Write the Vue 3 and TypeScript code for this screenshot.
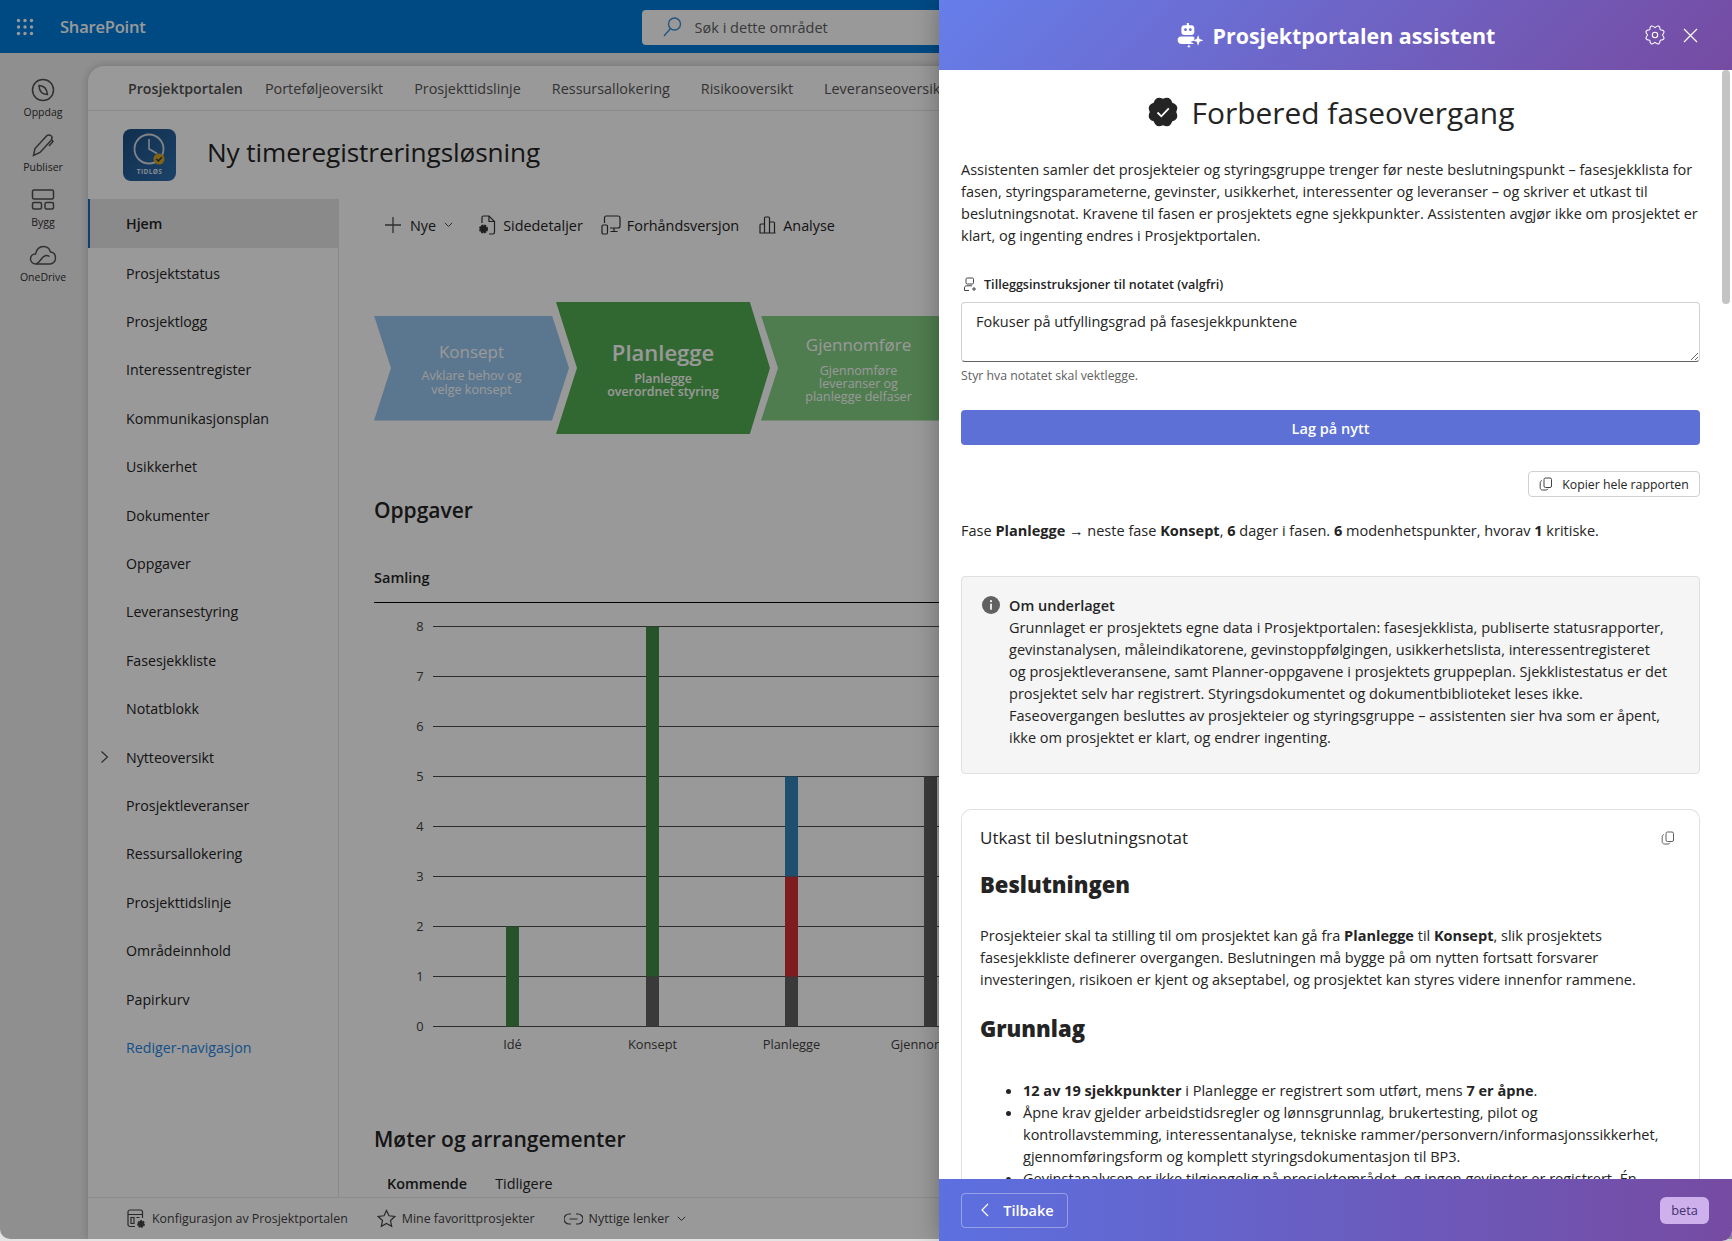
<template>
  <div class="app">
    <div class="page">
      <header class="topbar">
        <svg class="waffle" width="18" height="18" viewBox="0 0 18 18">
          <circle v-for="d in waffleDots" :key="d.key" :cx="d.x" :cy="d.y" r="1.7" fill="#ffffff" />
        </svg>
        <span class="brand">SharePoint</span>
        <div class="search">
          <svg width="22" height="22" viewBox="0 0 22 22" fill="none" stroke="#3d8fd6" stroke-width="1.4">
            <circle cx="13.5" cy="8" r="6" />
            <path d="M9.5 12.5 3 20" />
          </svg>
          <span>Søk i dette området</span>
        </div>
      </header>

      <div class="page-body">
        <aside class="rail">
          <div class="rail-item">
            <svg width="24" height="24" viewBox="0 0 24 24" fill="none" stroke="#505050" stroke-width="1.5">
              <circle cx="12" cy="12" r="10.5" />
              <path d="M8 7.5c5 .2 8 3.5 8.5 9-5.2-.2-8.3-3.5-8.5-9Z" />
            </svg>
            <span>Oppdag</span>
          </div>
          <div class="rail-item">
            <svg width="24" height="24" viewBox="0 0 24 24" fill="none" stroke="#505050" stroke-width="1.5">
              <path d="M2.5 22.5 4 15.5 15.5 3c1.5-1.5 4-1.5 5 .2 1 1.5.5 3-.5 4.3L9 19.5Z" />
              <path d="M21 7l1 1.5-4 4.5" />
            </svg>
            <span>Publiser</span>
          </div>
          <div class="rail-item">
            <svg width="24" height="22" viewBox="0 0 24 22" fill="none" stroke="#505050" stroke-width="1.5">
              <rect x="1.5" y="1" width="21" height="9" rx="1.5" />
              <rect x="1.5" y="13.5" width="9" height="6.5" rx="1.5" />
              <rect x="14" y="13.5" width="8.5" height="6.5" rx="1.5" />
            </svg>
            <span>Bygg</span>
          </div>
          <div class="rail-item">
            <svg width="28" height="22" viewBox="0 0 28 22" fill="none" stroke="#505050" stroke-width="1.4">
              <path d="M7 20c-3.3 0-5.5-2.3-5.500-5 0-3 2.200-5 5-5 1-4.500 4-7.500 8-7.500 3.500 0 6 2 7 5.500 3 .3 5 2.800 5 6 0 3.500-2.500 6-5.500 6Z" />
              <path d="M7 20c3-1 4.500-4 6.500-6.500 2-2 5-2.500 7-1" />
            </svg>
            <span>OneDrive</span>
          </div>
        </aside>

        <div class="card">
          <nav class="site-nav">
            <a v-for="(link, i) in siteLinks" :key="link" :class="{ current: i === 0 }">{{ link }}</a>
          </nav>

          <div class="site-head">
            <div class="logo">
              <svg width="53" height="52" viewBox="0 0 53 52">
                <circle cx="26" cy="20" r="14.5" fill="none" stroke="#d8dde2" stroke-width="1.8" />
                <path d="M26 10v10l8 4.500" fill="none" stroke="#d8dde2" stroke-width="1.6" />
                <circle cx="36" cy="30" r="5.5" fill="#d9a520" />
                <path d="m33.300 30 2 2 3.500-3.800" fill="none" stroke="#14375c" stroke-width="1.5" />
              </svg>
              <span class="logo-text">TIDLØS</span>
            </div>
            <h1>Ny timeregistreringsløsning</h1>
          </div>

          <div class="site-body">
            <aside class="side">
              <a
                v-for="item in sideItems"
                :key="item"
                class="side-item"
                :class="{ active: item === 'Hjem', edit: item === 'Rediger-navigasjon' }"
              >
                <svg v-if="item === 'Nytteoversikt'" class="side-caret" width="9" height="14" viewBox="0 0 9 14" fill="none" stroke="#444" stroke-width="1.1">
                  <path d="m1.500 1.500 6 5.500-6 5.500" />
                </svg>
                {{ item }}
              </a>
            </aside>

            <main class="content">
              <div class="cmdbar">
                <div class="cmd cmd-new">
                  <svg width="18" height="18" viewBox="0 0 18 18" stroke="#505050" stroke-width="1.3"><path d="M9 1v16M1 9h16" /></svg>
                  <span>Nye</span>
                  <svg width="9" height="6" viewBox="0 0 9 6" fill="none" stroke="#505050"><path d="m.8.8 3.700 3.700L8.200.8" /></svg>
                </div>
                <div class="cmd cmd-details">
                  <svg width="18" height="20" viewBox="0 0 18 20" fill="none" stroke="#333" stroke-width="1.2">
                    <path d="M4 8V2.500c0-.8.500-1.500 1.500-1.500H11l5.500 5.500V17c0 1-.7 2-1.700 2H11" />
                    <path d="M11 1v5.500h5.500" />
                    <circle cx="5.5" cy="14" r="3.5" fill="#333" stroke-dasharray="2 .8" stroke-width="2" />
                  </svg>
                  <span>Sidedetaljer</span>
                </div>
                <div class="cmd cmd-preview">
                  <svg width="20" height="20" viewBox="0 0 20 20" fill="none" stroke="#333" stroke-width="1.2">
                    <path d="M3.500 8V3c0-1 .7-2 1.700-2H17c1 0 2 1 2 2v8c0 1-1 2-2 2H9" />
                    <rect x="1" y="10" width="5.5" height="9" rx="1.2" />
                    <path d="M13 13v3M9.500 16.500h7" />
                  </svg>
                  <span>Forhåndsversjon</span>
                </div>
                <div class="cmd">
                  <svg width="18" height="18" viewBox="0 0 18 18" fill="none" stroke="#333" stroke-width="1.2">
                    <path d="M1 17V9c0-.6.400-1 1-1h3.500v9M5.500 17V2c0-.6.400-1 1-1h3c.6 0 1 .4 1 1v15M10.500 17V6h4c.6 0 1 .4 1 1v10M.5 17h16" />
                  </svg>
                  <span>Analyse</span>
                </div>
              </div>

              <div class="phases">
                <div class="phase phase-a">
                  <strong>Konsept</strong>
                  <small>Avklare behov og<br />velge konsept</small>
                </div>
                <div class="phase phase-b">
                  <strong>Planlegge</strong>
                  <small>Planlegge<br />overordnet styring</small>
                </div>
                <div class="phase phase-c">
                  <strong>Gjennomføre</strong>
                  <small>Gjennomføre<br />leveranser og<br />planlegge delfaser</small>
                </div>
              </div>

              <h2 class="section-title">Oppgaver</h2>
              <div class="chart-title">Samling</div>
              <svg class="chart" width="700" height="460" viewBox="0 0 700 460">
                <g v-for="n in 9" :key="n">
                  <line x1="59" :x2="700" :y1="gridY(n - 1)" :y2="gridY(n - 1)" stroke="#4c4c4c" stroke-width="1" />
                  <text class="axis" x="46" :y="gridY(n - 1) + 4.5" text-anchor="middle">{{ n - 1 }}</text>
                </g>
                <g v-for="col in chartColumns" :key="col.label">
                  <rect
                    v-for="seg in col.segments"
                    :key="seg.from"
                    :x="col.x - 6.5"
                    :y="gridY(seg.to)"
                    width="13"
                    :height="gridY(seg.from) - gridY(seg.to)"
                    :fill="seg.color"
                  />
                  <text class="axis" :x="col.x" y="448" text-anchor="middle">{{ col.label }}</text>
                </g>
              </svg>

              <h2 class="section-title meetings">Møter og arrangementer</h2>
              <div class="tabs">
                <span class="tab-on">Kommende</span>
                <span>Tidligere</span>
              </div>
            </main>
          </div>

          <footer class="site-foot">
            <div class="foot-link">
              <svg width="19" height="20" viewBox="0 0 19 20" fill="none" stroke="#444" stroke-width="1.2">
                <path d="M8 17.500H3c-1 0-2-1-2-2V3c0-1 1-2 2-2h10.500c1 0 2 1 2 2v6" />
                <path d="M1 5.500h14.500M4 8.500h3v6H4zM9.500 8.500h3" />
                <circle cx="14" cy="15" r="3" fill="#444" stroke-dasharray="1.8 .8" stroke-width="1.8" />
              </svg>
              <span>Konfigurasjon av Prosjektportalen</span>
            </div>
            <div class="foot-link">
              <svg width="19" height="19" viewBox="0 0 19 19" fill="none" stroke="#444" stroke-width="1.2">
                <path d="m9.500 1.500 2.500 5.300 5.800.7-4.300 4 1.200 5.800-5.200-2.900-5.200 2.900 1.200-5.800-4.300-4 5.800-.7Z" />
              </svg>
              <span>Mine favorittprosjekter</span>
            </div>
            <div class="foot-link">
              <svg width="19" height="12" viewBox="0 0 19 12" fill="none" stroke="#444" stroke-width="1.2">
                <path d="M7 1H5a5 5 0 0 0 0 10h2M12 1h2a5 5 0 0 1 0 10h-2M5.500 6h8" />
              </svg>
              <span>Nyttige lenker</span>
              <svg class="small-chevron" width="9" height="6" viewBox="0 0 9 6" fill="none" stroke="#444"><path d="m.8.8 3.700 3.700L8.200.8" /></svg>
            </div>
          </footer>
        </div>
      </div>
      <div class="dim"></div>
    </div>

    <section class="panel">
      <header class="panel-head">
        <div class="panel-name">
          <svg width="28" height="28" viewBox="0 0 26 26" fill="#ffffff">
            <path fill-rule="evenodd" d="M10 1h2v2h2.500c1.400 0 2.500 1.100 2.500 2.500v4c0 1.400-1.100 2.500-2.500 2.500h-7C6.100 12 5 10.900 5 9.500v-4C5 4.100 6.100 3 7.500 3H10ZM8.800 5.800a1.300 1.300 0 1 0 0 2.600 1.300 1.300 0 0 0 0-2.600Zm4.500 0a1.300 1.300 0 1 0 0 2.600 1.300 1.300 0 0 0 0-2.600Z" />
            <path d="M4.500 13.500h10.300c1 0 1.900.4 2.500 1.100l-1 2.900-3 1 2.700 1 .4 1H5.500C3 20.500 1.500 19 1.500 16.800c0-2 1.300-3.300 3-3.300Z" />
            <path d="m20.500 12 1.300 3.700 3.700 1.300-3.700 1.300-1.300 3.700-1.300-3.700-3.700-1.300 3.700-1.300ZM12 20.500l.5 1.500 1.500.5-1.500.5-.5 1.500-.5-1.500-1.500-.5 1.500-.5Z" />
          </svg>
          <span>Prosjektportalen assistent</span>
        </div>
        <div class="panel-actions">
          <svg width="20" height="20" viewBox="0 0 20 20" fill="none" stroke="#ffffff" stroke-width="1.1">
            <path :d="gearPath" stroke-linejoin="round" />
            <circle cx="10" cy="10" r="2.7" />
          </svg>
          <svg width="15" height="15" viewBox="0 0 15 15" stroke="#ffffff" stroke-width="1.2"><path d="m1 1 13 13M14 1 1 14" /></svg>
        </div>
      </header>

      <div class="panel-body">
        <div class="tool-title">
          <svg width="32" height="32" viewBox="0 0 32 32">
            <path :d="badgePath" fill="#242424" />
            <path d="m10.500 16.500 3.800 3.800 7.500-8" fill="none" stroke="#ffffff" stroke-width="1.8" />
          </svg>
          <h2>Forbered faseovergang</h2>
        </div>

        <p class="intro">
          Assistenten samler det prosjekteier og styringsgruppe trenger før neste beslutningspunkt – fasesjekklista for
          fasen, styringsparameterne, gevinster, usikkerhet, interessenter og leveranser – og skriver et utkast til
          beslutningsnotat. Kravene til fasen er prosjektets egne sjekkpunkter. Assistenten avgjør ikke om prosjektet er
          klart, og ingenting endres i Prosjektportalen.
        </p>

        <label class="field-label">
          <svg width="14" height="15" viewBox="0 0 14 15" fill="none" stroke="#424242" stroke-width="1">
            <rect x="3" y="1" width="7.5" height="6" rx="1.2" />
            <path d="M1.500 13.500V11c0-1.200.8-2.200 2-2.200h5.500M6 13.500H1.500M11 10v4M9 12h4" />
          </svg>
          Tilleggsinstruksjoner til notatet (valgfri)
        </label>
        <textarea class="field" :value="instructions" rows="2"></textarea>
        <div class="hint">Styr hva notatet skal vektlegge.</div>

        <button class="primary">Lag på nytt</button>

        <div class="copy-row">
          <button class="copy-all">
            <svg width="14" height="14" viewBox="0 0 14 14" fill="none" stroke="#424242" stroke-width="1">
              <rect x="5" y="1" width="7.5" height="9.5" rx="1.5" />
              <path d="M3 3.500c-1 .3-1.800 1-1.800 2v5.300c0 1.200 1 2.200 2.200 2.200h3.800c.8 0 1.500-.5 1.800-1.300" />
            </svg>
            Kopier hele rapporten
          </button>
        </div>

        <p class="summary">
          Fase <b>Planlegge</b> <span class="arrow">→</span> neste fase <b>Konsept</b>, <b>6</b> dager i fasen. <b>6</b> modenhetspunkter, hvorav
          <b>1</b> kritiske.
        </p>

        <div class="info">
          <svg width="18" height="18" viewBox="0 0 18 18">
            <circle cx="9" cy="9" r="9" fill="#616161" />
            <rect x="8.1" y="7.7" width="1.8" height="6" fill="#f5f5f5" />
            <circle cx="9" cy="5.2" r="1.1" fill="#f5f5f5" />
          </svg>
          <div>
            <div class="info-head">Om underlaget</div>
            Grunnlaget er prosjektets egne data i Prosjektportalen: fasesjekklista, publiserte statusrapporter,<br />
            gevinstanalysen, måleindikatorene, gevinstoppfølgingen, usikkerhetslista, interessentregisteret<br />
            og prosjektleveransene, samt Planner-oppgavene i prosjektets gruppeplan. Sjekklistestatus er det<br />
            prosjektet selv har registrert. Styringsdokumentet og dokumentbiblioteket leses ikke.<br />
            Faseovergangen besluttes av prosjekteier og styringsgruppe – assistenten sier hva som er åpent,<br />
            ikke om prosjektet er klart, og endrer ingenting.
          </div>
        </div>

        <article class="note">
          <div class="note-head">
            <span>Utkast til beslutningsnotat</span>
            <svg width="14" height="14" viewBox="0 0 14 14" fill="none" stroke="#616161" stroke-width="1">
              <rect x="5" y="1" width="7.5" height="9.5" rx="1.5" />
              <path d="M3 3.500c-1 .3-1.800 1-1.800 2v5.300c0 1.200 1 2.200 2.200 2.200h3.800c.8 0 1.500-.5 1.800-1.300" />
            </svg>
          </div>
          <h3>Beslutningen</h3>
          <p>
            Prosjekteier skal ta stilling til om prosjektet kan gå fra <b>Planlegge</b> til <b>Konsept</b>, slik prosjektets<br />
            fasesjekkliste definerer overgangen. Beslutningen må bygge på om nytten fortsatt forsvarer<br />
            investeringen, risikoen er kjent og akseptabel, og prosjektet kan styres videre innenfor rammene.
          </p>
          <h3 class="second">Grunnlag</h3>
          <ul>
            <li><b>12 av 19 sjekkpunkter</b> i Planlegge er registrert som utført, mens <b>7 er åpne</b>.</li>
            <li>
              Åpne krav gjelder arbeidstidsregler og lønnsgrunnlag, brukertesting, pilot og<br />
              kontrollavstemming, interessentanalyse, tekniske rammer/personvern/informasjonssikkerhet,<br />
              gjennomføringsform og komplett styringsdokumentasjon til BP3.
            </li>
            <li>Gevinstanalysen er ikke tilgjengelig på prosjektområdet, og ingen gevinster er registrert. Én</li>
          </ul>
        </article>
      </div>
      <div class="scroll-thumb"></div>

      <footer class="panel-foot">
        <button class="back">
          <svg width="8" height="14" viewBox="0 0 8 14" fill="none" stroke="#ffffff" stroke-width="1.2"><path d="M7 1 1 7l6 6" /></svg>
          Tilbake
        </button>
        <span class="beta">beta</span>
      </footer>
    </section>
  </div>
</template>

<script setup lang="ts">
interface Segment {
  from: number;
  to: number;
  color: string;
}

const DARK = '#616161';
const GREEN = '#418a46';

const siteLinks = [
  'Prosjektportalen',
  'Porteføljeoversikt',
  'Prosjekttidslinje',
  'Ressursallokering',
  'Risikooversikt',
  'Leveranseoversikt',
];

const sideItems = [
  'Hjem',
  'Prosjektstatus',
  'Prosjektlogg',
  'Interessentregister',
  'Kommunikasjonsplan',
  'Usikkerhet',
  'Dokumenter',
  'Oppgaver',
  'Leveransestyring',
  'Fasesjekkliste',
  'Notatblokk',
  'Nytteoversikt',
  'Prosjektleveranser',
  'Ressursallokering',
  'Prosjekttidslinje',
  'Områdeinnhold',
  'Papirkurv',
  'Rediger-navigasjon',
];

const chartColumns: { label: string; x: number; segments: Segment[] }[] = [
  { label: 'Idé', x: 138.5, segments: [{ from: 0, to: 2, color: GREEN }] },
  {
    label: 'Konsept',
    x: 278.5,
    segments: [
      { from: 0, to: 1, color: DARK },
      { from: 1, to: 8, color: GREEN },
    ],
  },
  {
    label: 'Planlegge',
    x: 417.5,
    segments: [
      { from: 0, to: 1, color: DARK },
      { from: 1, to: 3, color: '#d23036' },
      { from: 3, to: 5, color: '#3484b8' },
    ],
  },
  { label: 'Gjennomføre', x: 556.5, segments: [{ from: 0, to: 5, color: DARK }] },
];

const instructions = 'Fokuser på utfyllingsgrad på fasesjekkpunktene';

const gridY = (value: number) => 425.5 - value * 50;

const waffleDots = [0, 1, 2].flatMap((row) =>
  [0, 1, 2].map((col) => ({ key: `${row}-${col}`, x: 2.5 + col * 6.5, y: 2.5 + row * 6.5 })),
);

// scalloped outline, used for the badge and the settings gear
const lobes = (c: number, inner: number, outer: number, count: number) => {
  const at = (r: number, a: number) => `${(c + r * Math.cos(a)).toFixed(2)} ${(c + r * Math.sin(a)).toFixed(2)}`;
  const step = (Math.PI * 2) / count;
  let d = `M${at(inner, 0)}`;
  for (let i = 0; i < count; i++) {
    d += ` Q${at(outer, step * (i + 0.5))} ${at(inner, step * (i + 1))}`;
  }
  return d + 'Z';
};

const badgePath = lobes(16, 13.2, 18, 8);
const gearPath = lobes(10, 7.4, 12.4, 8);
</script>

<style>
html,
body {
  margin: 0;
  overflow: hidden;
}
</style>

<style scoped>
.app {
  position: relative;
  width: 1732px;
  height: 1241px;
  overflow: hidden;
  background: #e4e4e4;
  font-family: 'Open Sans', 'Noto Sans', sans-serif;
  font-size: 14.53px;
  color: #242424;
}
.page {
  position: relative;
  height: 1239px;
  display: flex;
  flex-direction: column;
  overflow: hidden;
  border-bottom-left-radius: 10px;
  background: #eeeeee;
}
.dim {
  position: absolute;
  inset: 0;
  background: rgba(0, 0, 0, 0.4);
}
.topbar {
  height: 53px;
  flex: none;
  display: flex;
  align-items: center;
  background: #007cdd;
  color: #fff;
}
.waffle {
  margin-left: 16px;
}
.brand {
  margin-left: 26px;
  font-size: 16.5px;
  font-weight: 600;
  letter-spacing: -0.2px;
}
.search {
  margin-left: 496px;
  width: 400px;
  height: 35px;
  margin-top: 1px;
  border-radius: 4px;
  background: #ffffff;
  display: flex;
  align-items: center;
  gap: 12px;
  padding-left: 19px;
  color: #616161;
  box-sizing: border-box;
}
.page-body {
  flex: 1;
  display: flex;
  min-height: 0;
}
.rail {
  width: 86px;
  padding-right: 2px;
  flex: none;
  padding-top: 25px;
  display: flex;
  flex-direction: column;
  align-items: center;
  gap: 7px;
}
.rail-item {
  height: 48px;
  display: flex;
  flex-direction: column;
  align-items: center;
  justify-content: flex-start;
  gap: 2px;
  font-size: 10.5px;
  color: #303030;
  font-weight: 500;
  line-height: 16px;
}
.rail-item svg {
  height: 24px;
  flex: none;
}
.card {
  flex: 1;
  margin-top: 13px;
  border-top-left-radius: 16px;
  background: #fff;
  box-shadow: 0 0 8px rgba(0, 0, 0, 0.2);
  display: flex;
  flex-direction: column;
  min-width: 0;
}
.site-nav {
  height: 44px;
  flex: none;
  display: flex;
  align-items: center;
  gap: 31px;
  padding-left: 40px;
  border-bottom: 1px solid #e4e4e4;
  font-size: 14.4px;
  color: #555;
  white-space: nowrap;
  overflow: hidden;
}
.site-nav .current {
  font-weight: 600;
  font-size: 14.2px;
  margin-right: -9px;
  color: #505050;
}
.site-head {
  height: 88px;
  flex: none;
  display: flex;
  align-items: center;
  padding-left: 35px;
  gap: 31px;
}
.site-head h1 {
  margin: 0 0 6px;
  font-size: 26.2px;
  font-weight: 500;
  color: #242424;
  letter-spacing: -0.1px;
}
.logo {
  position: relative;
  width: 53px;
  height: 52px;
  border-radius: 8px;
  background: linear-gradient(135deg, #1d4f82, #2d6eaf);
}
.logo svg {
  display: block;
}
.logo-text {
  position: absolute;
  left: 0;
  right: 0;
  bottom: 6px;
  text-align: center;
  font-size: 6.5px;
  font-weight: 700;
  color: #dce4ee;
  letter-spacing: 0.4px;
  line-height: 7px;
}
.site-body {
  flex: 1;
  min-height: 0;
  display: flex;
}
.side {
  width: 250px;
  flex: none;
  border-right: 1px solid #e4e4e4;
}
.side-item {
  position: relative;
  display: flex;
  align-items: center;
  height: 48.4px;
  padding-left: 38px;
  box-sizing: border-box;
  font-size: 14.2px;
  color: #242424;
}
.side-item:not(.active) {
  top: 1px;
}
.side-item.active {
  height: 49px;
  background: #e6e6e6;
  box-shadow: inset 2px 0 0 #0f6cbd;
  font-weight: 600;
}
.side-item.edit {
  color: #1f86e6;
}
.side-caret {
  position: absolute;
  left: 12px;
}
.content {
  flex: 1;
  min-width: 0;
  padding-left: 35px;
  overflow: hidden;
}
.cmdbar {
  height: 52px;
  display: flex;
  align-items: center;
  gap: 20px;
  padding-left: 10px;
  font-size: 14.4px;
}
.cmd {
  display: flex;
  align-items: center;
  gap: 6px;
  white-space: nowrap;
}
.cmd-new {
  gap: 8px;
  margin-right: 5px;
}
.cmd-details {
  gap: 7px;
}
.cmd-preview {
  margin-left: -2px;
}
.small-chevron {
  margin-left: 2px;
}
.phases {
  display: flex;
  align-items: center;
  margin-top: 51px;
  height: 132px;
  color: #fff;
  white-space: nowrap;
}
.phase {
  display: flex;
  flex-direction: column;
  align-items: center;
  justify-content: center;
  flex: none;
  text-align: center;
}
.phase strong {
  font-weight: 400;
}
.phase small {
  font-size: 12.5px;
  line-height: 14px;
  margin-top: 5px;
}
.phase-a {
  width: 195px;
  height: 105px;
  background: #98c6ee;
  clip-path: polygon(0 0, 91.3% 0, 100% 50%, 91.3% 100%, 0 100%, 8.7% 50%);
}
.phase-a strong {
  font-size: 17px;
  line-height: 24px;
}
.phase-b {
  width: 214px;
  height: 132px;
  margin-left: -13px;
  background: #52ad52;
  clip-path: polygon(0 0, 90.6% 0, 100% 50%, 90.6% 100%, 0 100%, 9.8% 50%);
  position: relative;
}
.phase-b strong {
  font-size: 22px;
  font-weight: 600;
  line-height: 26px;
}
.phase-b small {
  font-weight: 600;
  font-size: 12.4px;
  line-height: 13px;
  margin-top: 7px;
}
.phase-c {
  width: 195px;
  height: 105px;
  margin-left: -9px;
  background: #84d084;
  clip-path: polygon(0 0, 91.3% 0, 100% 50%, 91.3% 100%, 0 100%, 8.7% 50%);
}
.phase-c strong {
  font-size: 17px;
  line-height: 22px;
}
.phase-c small {
  line-height: 13px;
  margin-top: 8px;
}
.section-title {
  margin: 0;
  font-size: 21px;
  font-weight: 600;
  line-height: 30px;
  color: #242424;
}
.phases + .section-title {
  margin-top: 61px;
}
.chart-title {
  margin-top: 42px;
  height: 35px;
  line-height: 22px;
  font-weight: 600;
  font-size: 14.5px;
  border-bottom: 1px solid #000;
}
.chart {
  display: block;
  margin-top: -2px;
}
.axis {
  font-family: 'Open Sans', 'Noto Sans', sans-serif;
  font-size: 12.8px;
  fill: #424242;
}
.meetings {
  margin-top: 63px;
}
.tabs {
  display: flex;
  gap: 28px;
  margin-top: 20px;
  padding-left: 13px;
  font-size: 14.4px;
  line-height: 20px;
}
.tab-on {
  font-weight: 600;
}
.site-foot {
  height: 41px;
  flex: none;
  border-top: 1px solid #ececec;
  display: flex;
  align-items: center;
  padding-left: 39px;
  gap: 29px;
  font-size: 12.4px;
  color: #424242;
}
.foot-link {
  display: flex;
  align-items: center;
  gap: 6px;
}
.panel {
  position: absolute;
  top: 0;
  bottom: 0;
  left: 939px;
  right: 0;
  display: flex;
  flex-direction: column;
  background: #fff;
  border-bottom-right-radius: 10px;
  overflow: hidden;
  box-shadow: 0 0 26px rgba(0, 0, 0, 0.3);
}
.panel-head {
  height: 70px;
  flex: none;
  position: relative;
  display: flex;
  align-items: center;
  justify-content: center;
  color: #fff;
  background: linear-gradient(135deg, #667eea, #764ba2);
}
.panel-name {
  display: flex;
  align-items: center;
  gap: 9px;
  font-size: 21.4px;
  font-weight: 700;
  margin-top: 1px;
}
.panel-actions {
  position: absolute;
  right: 34px;
  top: 25px;
  display: flex;
  align-items: center;
  gap: 18px;
}
.panel-body {
  flex: 1;
  min-height: 0;
  overflow: hidden;
  padding: 0 32px 0 22px;
}
.tool-title {
  display: flex;
  align-items: center;
  justify-content: center;
  gap: 13px;
  height: 44px;
  margin-top: 20px;
}
.tool-title h2 {
  margin: 0;
  font-size: 29.9px;
  font-weight: 500;
  color: #242424;
}
.intro {
  margin: 24px 0 0;
  line-height: 22px;
}
.field-label {
  display: flex;
  align-items: center;
  gap: 7px;
  margin-top: 27px;
  padding-left: 2px;
  height: 22px;
  font-size: 12.6px;
  font-weight: 600;
}
.field {
  display: block;
  width: 100%;
  height: 60px;
  margin-top: 7px;
  padding: 7px 14px;
  box-sizing: border-box;
  border: 1px solid #d1d1d1;
  border-bottom-color: #616161;
  border-radius: 4px;
  font: inherit;
  line-height: 22px;
  color: #242424;
  outline: none;
}
.hint {
  margin-top: 5px;
  font-size: 12.3px;
  line-height: 18px;
  color: #616161;
}
.primary {
  display: block;
  width: 100%;
  height: 35px;
  margin-top: 25px;
  border: 0;
  border-radius: 4px;
  background: #5c70d6;
  color: #fff;
  font: inherit;
  font-weight: 600;
}
.copy-row {
  display: flex;
  justify-content: flex-end;
  margin-top: 26px;
}
.copy-all {
  width: 172px;
  height: 26px;
  display: flex;
  align-items: center;
  justify-content: center;
  gap: 9px;
  background: #fff;
  border: 1px solid #d1d1d1;
  border-radius: 4px;
  font: inherit;
  font-size: 12.3px;
  color: #242424;
  padding: 0;
}
.summary {
  margin: 22px 0 0;
  line-height: 22px;
}
.summary b,
.note b {
  font-weight: 700;
}
.arrow {
  font-family: 'Liberation Sans', sans-serif;
}
.info {
  display: flex;
  gap: 9px;
  margin-top: 34px;
  padding: 17px 20px 23px 20px;
  height: 198px;
  box-sizing: border-box;
  background: #f5f5f5;
  border: 1px solid #e0e0e0;
  border-radius: 4px;
  line-height: 22px;
}
.info > svg {
  flex: none;
  margin-top: 2px;
}
.info-head {
  font-weight: 600;
}
.note {
  margin-top: 35px;
  padding: 16px 18px 0;
  border: 1px solid #e0e0e0;
  border-radius: 10px 10px 0 0;
  border-bottom: 0;
  line-height: 22px;
}
.note-head {
  display: flex;
  align-items: center;
  justify-content: space-between;
  font-size: 17px;
  font-weight: 500;
  line-height: 24px;
  padding-right: 6px;
}
.note h3 {
  margin: 19px 0 0;
  font-size: 22px;
  font-weight: 800;
  line-height: 30px;
}
.note h3.second {
  margin-top: 23px;
}
.note p {
  margin: 25px 0 0;
}
.note ul {
  margin: 36px 0 0;
  padding-left: 43px;
}
.scroll-thumb {
  position: absolute;
  right: 2px;
  top: 70px;
  width: 8px;
  height: 234px;
  border-radius: 4px;
  background: #c4c4c4;
}
.panel-foot {
  height: 62px;
  flex: none;
  position: relative;
  display: flex;
  align-items: center;
  justify-content: space-between;
  padding: 0 23px 0 22px;
  background: linear-gradient(90deg, #5c70e0, #764ba2);
  color: #fff;
}
.back {
  width: 107px;
  height: 35px;
  display: flex;
  align-items: center;
  justify-content: center;
  gap: 14px;
  background: transparent;
  border: 1px solid rgba(255, 255, 255, 0.35);
  border-radius: 4px;
  color: #fff;
  font: inherit;
  font-weight: 600;
  padding: 0 0 0 6px;
}
.beta {
  width: 49px;
  height: 27px;
  display: flex;
  align-items: center;
  justify-content: center;
  border-radius: 6px;
  background: #cdb0ec;
  color: #43306e;
  font-size: 12.8px;
  font-weight: 500;
}
</style>
